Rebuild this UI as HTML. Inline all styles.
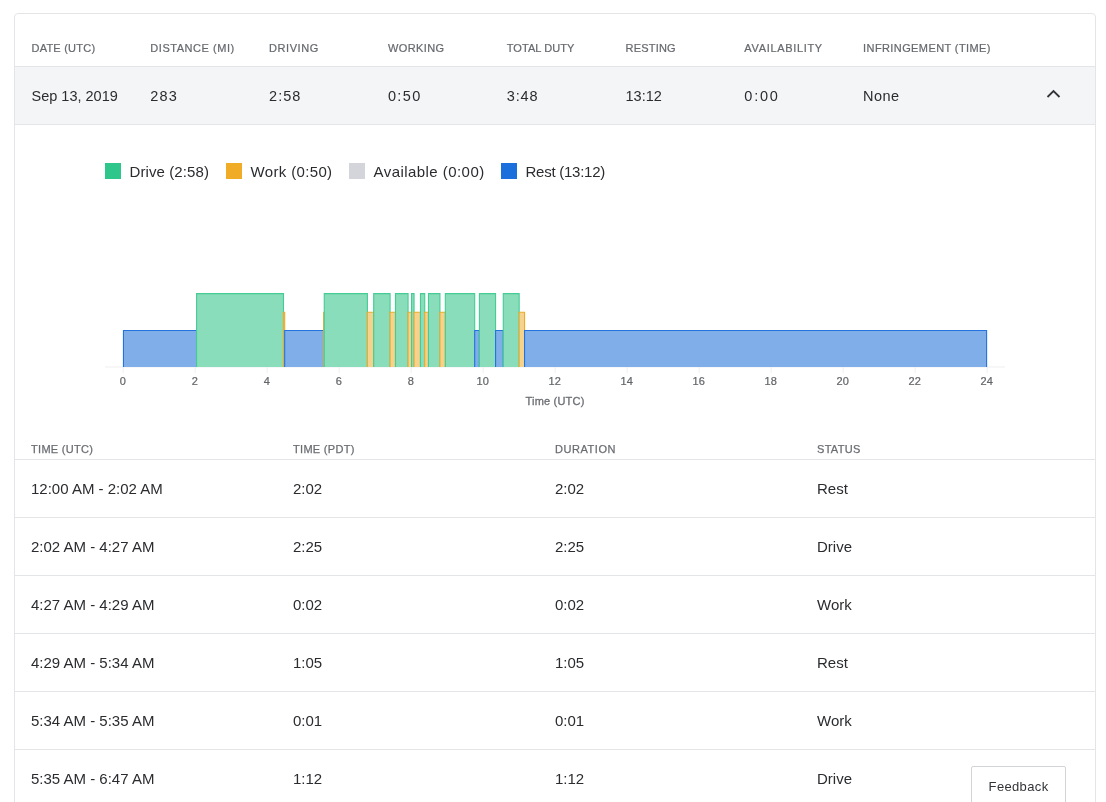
<!DOCTYPE html>
<html><head><meta charset="utf-8"><style>
html,body{margin:0;padding:0;background:#fff;width:1106px;height:802px;overflow:hidden;position:relative}
body{font-family:"Liberation Sans",sans-serif;color:#2b2c2f;-webkit-font-smoothing:antialiased}
.wrap{position:absolute;left:0;top:0;width:1106px;height:802px;will-change:transform}
.card{position:absolute;left:14px;top:13px;width:1080px;height:900px;border:1px solid #e3e5e9;border-radius:4px}
.abs{position:absolute}
.h{position:absolute;top:41px;font-size:11px;line-height:14px;letter-spacing:0.4px;color:#66696e;-webkit-text-stroke:0.22px #66696e;white-space:nowrap}
.hline{position:absolute;left:15px;width:1080px;top:66px;height:1px;background:#e3e5e9}
.grow{position:absolute;left:15px;width:1080px;top:67px;height:57px;background:#f4f5f7;border-bottom:1px solid #e3e5e9}
.v{position:absolute;top:87px;font-size:14.5px;line-height:18px;color:#2b2c2f;white-space:nowrap}
.sq{position:absolute;top:163px;width:16px;height:16px}
.lt{position:absolute;top:163px;font-size:15px;line-height:18px;color:#2b2c2f;white-space:nowrap}
svg text{font-family:"Liberation Sans",sans-serif;font-size:11px;fill:#626569;stroke:#626569;stroke-width:0.22px}
svg text.ttl{fill:#6a6d72;stroke:#6a6d72;stroke-width:0.3px;letter-spacing:0.2px}
.th{position:absolute;top:442px;font-size:11px;line-height:14px;letter-spacing:0.3px;color:#6a6d72;-webkit-text-stroke:0.25px #6a6d72;white-space:nowrap}
.line{position:absolute;left:15px;width:1080px;height:1px;background:#e3e5e9}
.td{position:absolute;font-size:15px;line-height:18px;color:#2b2c2f;white-space:nowrap}
.fb{position:absolute;left:971px;top:766px;width:95px;height:50px;border:1px solid #d2d4d9;border-radius:2px;background:#fff;box-sizing:border-box}
.fbt{position:absolute;left:988.6px;top:778px;font-size:13px;line-height:17px;letter-spacing:0.35px;color:#333437}
</style></head><body><div class="wrap">
<div class="card"></div>
<div class="h" style="left:31.50px;letter-spacing:0.23px">DATE (UTC)</div><div class="h" style="left:150.30px;letter-spacing:0.54px">DISTANCE (MI)</div><div class="h" style="left:269.10px;letter-spacing:0.55px">DRIVING</div><div class="h" style="left:387.90px;letter-spacing:0.4px">WORKING</div><div class="h" style="left:506.70px;letter-spacing:0.08px">TOTAL DUTY</div><div class="h" style="left:625.50px;letter-spacing:0.2px">RESTING</div><div class="h" style="left:744.30px;letter-spacing:0.67px">AVAILABILITY</div><div class="h" style="left:863.10px;letter-spacing:0.4px">INFRINGEMENT (TIME)</div>
<div class="hline"></div>
<div class="grow"></div>
<div class="v" style="left:31.50px;letter-spacing:0px">Sep 13, 2019</div><div class="v" style="left:150.30px;letter-spacing:1.2px">283</div><div class="v" style="left:269.10px;letter-spacing:1.0px">2:58</div><div class="v" style="left:387.90px;letter-spacing:1.4px">0:50</div><div class="v" style="left:506.70px;letter-spacing:0.9px">3:48</div><div class="v" style="left:625.50px;letter-spacing:0px">13:12</div><div class="v" style="left:744.30px;letter-spacing:1.8px">0:00</div><div class="v" style="left:863.10px;letter-spacing:0.4px">None</div>
<svg class="abs" style="left:1046px;top:88px" width="15" height="12" viewBox="1046 88 15 12"><polyline points="1047.5,97 1053.5,91 1059.5,97" fill="none" stroke="#333437" stroke-width="1.8"/></svg>
<div class="sq" style="left:105px;background:#2ec68a"></div><div class="lt" style="left:129.5px;letter-spacing:0.1px">Drive (2:58)</div><div class="sq" style="left:226px;background:#f0ac27"></div><div class="lt" style="left:250.5px;letter-spacing:0.35px">Work (0:50)</div><div class="sq" style="left:349px;background:#d3d5da"></div><div class="lt" style="left:373.5px;letter-spacing:0.45px">Available (0:00)</div><div class="sq" style="left:501px;background:#1a6fdc"></div><div class="lt" style="left:525.5px;letter-spacing:-0.25px">Rest (13:12)</div>
<svg class="abs" style="left:0;top:0" width="1106" height="420" viewBox="0 0 1106 420">
<line x1="105" y1="367" x2="1005" y2="367" stroke="#eeeff1" stroke-width="1"/>
<line x1="123.1" y1="367" x2="123.1" y2="373" stroke="#eeeff1" stroke-width="1"/>
<line x1="195.1" y1="367" x2="195.1" y2="373" stroke="#eeeff1" stroke-width="1"/>
<line x1="267.1" y1="367" x2="267.1" y2="373" stroke="#eeeff1" stroke-width="1"/>
<line x1="339.1" y1="367" x2="339.1" y2="373" stroke="#eeeff1" stroke-width="1"/>
<line x1="411.1" y1="367" x2="411.1" y2="373" stroke="#eeeff1" stroke-width="1"/>
<line x1="483.1" y1="367" x2="483.1" y2="373" stroke="#eeeff1" stroke-width="1"/>
<line x1="555.1" y1="367" x2="555.1" y2="373" stroke="#eeeff1" stroke-width="1"/>
<line x1="627.1" y1="367" x2="627.1" y2="373" stroke="#eeeff1" stroke-width="1"/>
<line x1="699.1" y1="367" x2="699.1" y2="373" stroke="#eeeff1" stroke-width="1"/>
<line x1="771.1" y1="367" x2="771.1" y2="373" stroke="#eeeff1" stroke-width="1"/>
<line x1="843.1" y1="367" x2="843.1" y2="373" stroke="#eeeff1" stroke-width="1"/>
<line x1="915.1" y1="367" x2="915.1" y2="373" stroke="#eeeff1" stroke-width="1"/>
<line x1="987.1" y1="367" x2="987.1" y2="373" stroke="#eeeff1" stroke-width="1"/>
<rect x="123.45" y="330.5" width="73.13" height="36.50" fill="#80aee8"/>
<path d="M123.45,367 V330.5 H196.58 V367" fill="none" stroke="#2472dd" stroke-width="1.1"/>
<rect x="196.58" y="293.6" width="86.91" height="73.40" fill="#89ddba"/>
<path d="M196.58,367 V293.6 H283.49 V367" fill="none" stroke="#45cc94" stroke-width="1.1"/>
<rect x="283.49" y="312.3" width="1.20" height="54.70" fill="#f5d28e"/>
<path d="M283.49,367 V312.3 H284.69 V367" fill="none" stroke="#f0ab28" stroke-width="1.1"/>
<rect x="284.69" y="330.5" width="38.96" height="36.50" fill="#80aee8"/>
<path d="M284.69,367 V330.5 H323.65 V367" fill="none" stroke="#2472dd" stroke-width="1.1"/>
<rect x="323.65" y="312.3" width="0.60" height="54.70" fill="#f5d28e"/>
<path d="M323.65,367 V312.3 H324.25 V367" fill="none" stroke="#f0ab28" stroke-width="1.1"/>
<rect x="324.25" y="293.6" width="43.16" height="73.40" fill="#89ddba"/>
<path d="M324.25,367 V293.6 H367.41 V367" fill="none" stroke="#45cc94" stroke-width="1.1"/>
<rect x="367.41" y="312.3" width="6.29" height="54.70" fill="#f5d28e"/>
<path d="M367.41,367 V312.3 H373.7 V367" fill="none" stroke="#f0ab28" stroke-width="1.1"/>
<rect x="373.7" y="293.6" width="16.39" height="73.40" fill="#89ddba"/>
<path d="M373.7,367 V293.6 H390.09 V367" fill="none" stroke="#45cc94" stroke-width="1.1"/>
<rect x="390.09" y="312.3" width="5.39" height="54.70" fill="#f5d28e"/>
<path d="M390.09,367 V312.3 H395.48 V367" fill="none" stroke="#f0ab28" stroke-width="1.1"/>
<rect x="395.48" y="293.6" width="12.59" height="73.40" fill="#89ddba"/>
<path d="M395.48,367 V293.6 H408.07 V367" fill="none" stroke="#45cc94" stroke-width="1.1"/>
<rect x="408.07" y="312.3" width="3.45" height="54.70" fill="#f5d28e"/>
<path d="M408.07,367 V312.3 H411.52 V367" fill="none" stroke="#f0ab28" stroke-width="1.1"/>
<rect x="411.52" y="293.6" width="2.54" height="73.40" fill="#89ddba"/>
<path d="M411.52,367 V293.6 H414.06 V367" fill="none" stroke="#45cc94" stroke-width="1.1"/>
<rect x="414.06" y="312.3" width="6.40" height="54.70" fill="#f5d28e"/>
<path d="M414.06,367 V312.3 H420.46 V367" fill="none" stroke="#f0ab28" stroke-width="1.1"/>
<rect x="420.46" y="293.6" width="4.29" height="73.40" fill="#89ddba"/>
<path d="M420.46,367 V293.6 H424.75 V367" fill="none" stroke="#45cc94" stroke-width="1.1"/>
<rect x="424.75" y="312.3" width="3.70" height="54.70" fill="#f5d28e"/>
<path d="M424.75,367 V312.3 H428.45 V367" fill="none" stroke="#f0ab28" stroke-width="1.1"/>
<rect x="428.45" y="293.6" width="11.49" height="73.40" fill="#89ddba"/>
<path d="M428.45,367 V293.6 H439.94 V367" fill="none" stroke="#45cc94" stroke-width="1.1"/>
<rect x="439.94" y="312.3" width="5.39" height="54.70" fill="#f5d28e"/>
<path d="M439.94,367 V312.3 H445.33 V367" fill="none" stroke="#f0ab28" stroke-width="1.1"/>
<rect x="445.33" y="293.6" width="29.37" height="73.40" fill="#89ddba"/>
<path d="M445.33,367 V293.6 H474.7 V367" fill="none" stroke="#45cc94" stroke-width="1.1"/>
<rect x="474.7" y="330.5" width="4.70" height="36.50" fill="#80aee8"/>
<path d="M474.7,367 V330.5 H479.4 V367" fill="none" stroke="#2472dd" stroke-width="1.1"/>
<rect x="479.4" y="293.6" width="16.18" height="73.40" fill="#89ddba"/>
<path d="M479.4,367 V293.6 H495.58 V367" fill="none" stroke="#45cc94" stroke-width="1.1"/>
<rect x="495.58" y="330.5" width="7.70" height="36.50" fill="#80aee8"/>
<path d="M495.58,367 V330.5 H503.28 V367" fill="none" stroke="#2472dd" stroke-width="1.1"/>
<rect x="503.28" y="293.6" width="15.88" height="73.40" fill="#89ddba"/>
<path d="M503.28,367 V293.6 H519.16 V367" fill="none" stroke="#45cc94" stroke-width="1.1"/>
<rect x="519.16" y="312.3" width="5.40" height="54.70" fill="#f5d28e"/>
<path d="M519.16,367 V312.3 H524.56 V367" fill="none" stroke="#f0ab28" stroke-width="1.1"/>
<rect x="524.56" y="330.5" width="462.04" height="36.50" fill="#80aee8"/>
<path d="M524.56,367 V330.5 H986.6 V367" fill="none" stroke="#2472dd" stroke-width="1.1"/>
<text x="122.7" y="385" text-anchor="middle">0</text>
<text x="194.7" y="385" text-anchor="middle">2</text>
<text x="266.7" y="385" text-anchor="middle">4</text>
<text x="338.7" y="385" text-anchor="middle">6</text>
<text x="410.7" y="385" text-anchor="middle">8</text>
<text x="482.7" y="385" text-anchor="middle">10</text>
<text x="554.7" y="385" text-anchor="middle">12</text>
<text x="626.7" y="385" text-anchor="middle">14</text>
<text x="698.7" y="385" text-anchor="middle">16</text>
<text x="770.7" y="385" text-anchor="middle">18</text>
<text x="842.7" y="385" text-anchor="middle">20</text>
<text x="914.7" y="385" text-anchor="middle">22</text>
<text x="986.7" y="385" text-anchor="middle">24</text>
<text x="555" y="405" text-anchor="middle" class="ttl">Time (UTC)</text>
</svg>
<div class="th" style="left:31px;letter-spacing:0.3px">TIME (UTC)</div><div class="th" style="left:293px;letter-spacing:0.3px">TIME (PDT)</div><div class="th" style="left:555px;letter-spacing:0.55px">DURATION</div><div class="th" style="left:817px;letter-spacing:0.3px">STATUS</div>
<div class="line" style="top:459px"></div><div class="td" style="left:31px;top:480px">12:00 AM - 2:02 AM</div><div class="td" style="left:293px;top:480px">2:02</div><div class="td" style="left:555px;top:480px">2:02</div><div class="td" style="left:817px;top:480px">Rest</div><div class="line" style="top:517px"></div><div class="td" style="left:31px;top:538px">2:02 AM - 4:27 AM</div><div class="td" style="left:293px;top:538px">2:25</div><div class="td" style="left:555px;top:538px">2:25</div><div class="td" style="left:817px;top:538px">Drive</div><div class="line" style="top:575px"></div><div class="td" style="left:31px;top:596px">4:27 AM - 4:29 AM</div><div class="td" style="left:293px;top:596px">0:02</div><div class="td" style="left:555px;top:596px">0:02</div><div class="td" style="left:817px;top:596px">Work</div><div class="line" style="top:633px"></div><div class="td" style="left:31px;top:654px">4:29 AM - 5:34 AM</div><div class="td" style="left:293px;top:654px">1:05</div><div class="td" style="left:555px;top:654px">1:05</div><div class="td" style="left:817px;top:654px">Rest</div><div class="line" style="top:691px"></div><div class="td" style="left:31px;top:712px">5:34 AM - 5:35 AM</div><div class="td" style="left:293px;top:712px">0:01</div><div class="td" style="left:555px;top:712px">0:01</div><div class="td" style="left:817px;top:712px">Work</div><div class="line" style="top:749px"></div><div class="td" style="left:31px;top:770px">5:35 AM - 6:47 AM</div><div class="td" style="left:293px;top:770px">1:12</div><div class="td" style="left:555px;top:770px">1:12</div><div class="td" style="left:817px;top:770px">Drive</div><div class="line" style="top:807px"></div>
<div class="fb"></div><div class="fbt">Feedback</div>
</div></body></html>
